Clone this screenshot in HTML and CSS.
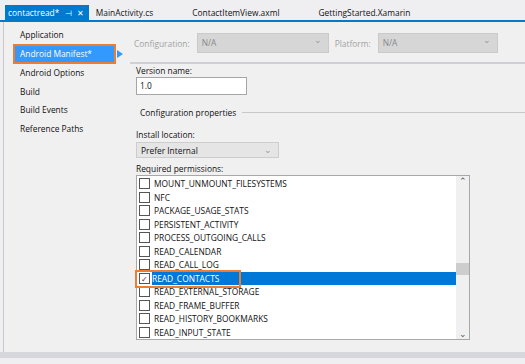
FILE: index.html
```
<!DOCTYPE html>
<html>
<head>
<meta charset="utf-8">
<link rel="stylesheet" href="styles.css">
<title>contactread</title>
</head>
<body>
<div class="tabs">
    <div class="tab active">contactread* <span class="pin">&#8867;</span> <span class="close">&#10005;</span></div>
    <div class="tab">MainActivity.cs</div>
    <div class="tab">ContactItemView.axml</div>
    <div class="tab">GettingStarted.Xamarin</div>
</div>

<div class="main">
    <div class="nav">
        <div class="nav-item">Application</div>
        <div class="nav-item selected">Android Manifest*</div>
        <div class="nav-item">Android Options</div>
        <div class="nav-item">Build</div>
        <div class="nav-item">Build Events</div>
        <div class="nav-item">Reference Paths</div>
    </div>

    <div class="content">
        <div class="config-row">
            <span class="dim-label">Configuration:</span>
            <div class="select disabled wide">N/A <span class="chev">&#8964;</span></div>
            <span class="dim-label">Platform:</span>
            <div class="select disabled narrow">N/A <span class="chev">&#8964;</span></div>
        </div>

        <div class="form">
            <div class="label first">Version name:</div>
            <div class="input">1.0</div>

            <div class="group-title"><span>Configuration properties</span><div class="rule"></div></div>

            <div class="label">Install location:</div>
            <div class="select install">Prefer Internal <span class="chev">&#8964;</span></div>

            <div class="label">Required permissions:</div>
            <div class="listbox">
                <div class="items">
                    <div class="item"><span class="box"></span>MOUNT_UNMOUNT_FILESYSTEMS</div>
                    <div class="item"><span class="box"></span>NFC</div>
                    <div class="item"><span class="box"></span>PACKAGE_USAGE_STATS</div>
                    <div class="item"><span class="box"></span>PERSISTENT_ACTIVITY</div>
                    <div class="item"><span class="box"></span>PROCESS_OUTGOING_CALLS</div>
                    <div class="item"><span class="box"></span>READ_CALENDAR</div>
                    <div class="item"><span class="box"></span>READ_CALL_LOG</div>
                    <div class="item checked"><span class="box">&#10003;</span><span class="hl">READ_CONTACTS</span></div>
                    <div class="item"><span class="box"></span>READ_EXTERNAL_STORAGE</div>
                    <div class="item"><span class="box"></span>READ_FRAME_BUFFER</div>
                    <div class="item"><span class="box"></span>READ_HISTORY_BOOKMARKS</div>
                    <div class="item"><span class="box"></span>READ_INPUT_STATE</div>
                </div>
                <div class="scrollbar">
                    <span class="arrow">&#8963;</span>
                    <div class="thumb"></div>
                    <span class="arrow">&#8964;</span>
                </div>
            </div>
        </div>
    </div>
</div>
<div class="bottom"></div>
</body>
</html>
```

FILE: styles.css
```
body {
    margin: 0;
    width: 525px;
    height: 364px;
    overflow: hidden;
    background: #efeff2;
    font-family: "Open Sans", "Noto Sans", sans-serif;
    font-size: 8.4px;
    color: #111;
}

.tabs {
    display: flex;
    height: 20px;
    padding-left: 5px;
    align-items: flex-end;
    border-bottom: 2px solid #007acc;
}

.tab {
    height: 15px;
    line-height: 15px;
    padding: 0 5px;
    margin-right: 29px;
    white-space: nowrap;
}

.tab.active {
    background: #007acc;
    color: #fff;
    margin-right: 2px;
    padding: 0 5px 0 3px;
}

.tab .pin, .tab .close {
    font-size: 8px;
    margin-left: 3px;
}

.main {
    display: flex;
    height: 330px;
    border-left: 1px solid #c9c9c9;
    margin-left: 3px;
    background: #f0f0f0;
}

.nav {
    width: 126px;
    padding-top: 3.5px;
    flex-shrink: 0;
}

.nav-item {
    height: 18.5px;
    line-height: 18.5px;
    padding-left: 6px;
    margin-left: 10px;
    width: 97px;
}

.nav-item.selected {
    position: relative;
    background: #3399ff;
    color: #fff;
    height: 16px;
    line-height: 16px;
    padding-left: 5px;
    width: 94px;
    border: 2px solid #ed7d31;
    margin-left: 9px;
}

.nav-item.selected::after {
    content: "";
    position: absolute;
    right: -9px;
    top: 4px;
    border-left: 6px solid #3399ff;
    border-top: 4px solid transparent;
    border-bottom: 4px solid transparent;
}

.content {
    flex: 1;
    padding-top: 11px;
}

.config-row {
    display: flex;
    align-items: center;
    height: 20px;
    padding-left: 4px;
    border-bottom: 2px solid #cfcfd4;
    padding-bottom: 9px;
}

.dim-label {
    color: #a2a2a2;
    margin-right: 7px;
}

.select {
    position: relative;
    height: 16px;
    line-height: 15px;
    padding-left: 4px;
    box-sizing: border-box;
    border: 1px solid #cdcdcd;
    background: #e5e5e5;
}

.select.disabled {
    height: 20px;
    line-height: 18px;
    background: #d6d6d6;
    color: #888;
    border-color: #cacaca;
}

.select.wide {
    width: 132px;
    margin-right: 6px;
}

.select.narrow {
    width: 120px;
}

.chev {
    position: absolute;
    right: 6px;
    top: -3px;
    color: #9a9a9a;
    font-size: 9px;
}

.form {
    padding-left: 6px;
}

.label {
    height: 13px;
    line-height: 13px;
    margin-top: 2px;
}

.label.first {
    margin-top: 0;
}

.input {
    width: 111px;
    height: 18px;
    line-height: 16px;
    box-sizing: border-box;
    border: 1px solid #a6a6a6;
    background: #fff;
    padding-left: 3px;
}

.group-title {
    display: flex;
    align-items: center;
    height: 14px;
    margin: 10px 0 9px 4px;
}

.group-title .rule {
    flex: 1;
    margin-left: 6px;
    border-top: 1px solid #c8c8c8;
}

.install {
    width: 143px;
    margin-top: 1px;
    margin-bottom: 4px;
}

.install .chev {
    top: -1px;
}

.listbox {
    display: flex;
    width: 334px;
    height: 165px;
    box-sizing: border-box;
    border: 1px solid #a8a8a8;
    background: #fff;
    margin-top: 0;
}

.items {
    flex: 1;
    padding-top: 1px;
}

.item {
    display: flex;
    align-items: center;
    height: 13.5px;
    white-space: nowrap;
}

.box {
    width: 9px;
    height: 9px;
    border: 1px solid #555;
    background: #fff;
    margin: 0 4px 0 2px;
    font-size: 8px;
    line-height: 9px;
    text-align: center;
    color: #333;
}

.item.checked {
    position: relative;
    background: #0078d7;
    color: #fff;
    margin-left: 15px;
}

.item.checked .box {
    position: absolute;
    left: -15px;
    top: 1px;
}

.item.checked::before {
    content: "";
    position: absolute;
    left: -17px;
    top: -2px;
    width: 102px;
    height: 14px;
    border: 2px solid #ed7d31;
}

.scrollbar {
    width: 13px;
    background: #f0f0f0;
    display: flex;
    flex-direction: column;
    align-items: center;
}

.arrow {
    color: #555;
    font-size: 9px;
    height: 10px;
    line-height: 10px;
}

.scrollbar .thumb {
    width: 13px;
    height: 12px;
    background: #cdcdcd;
    margin-top: 77px;
    margin-bottom: auto;
}

.bottom {
    height: 6px;
    background: #d6d6dd;
    margin-top: 0;
}
```
